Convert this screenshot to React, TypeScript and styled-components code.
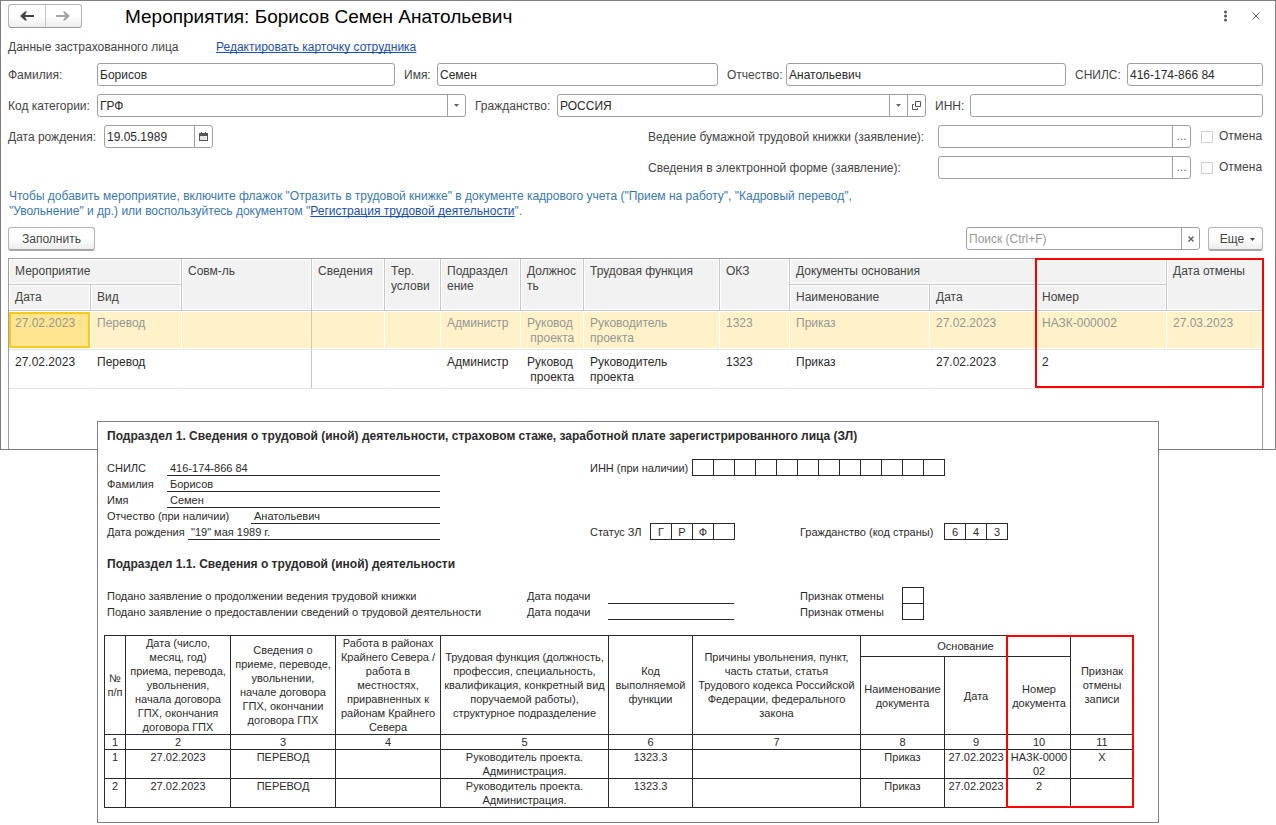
import React from "react";
import styled, { createGlobalStyle, css } from "styled-components";

const GlobalStyle = createGlobalStyle`
  *, *::before, *::after { box-sizing: border-box; }
  body {
    margin: 0;
    background: #fff;
    color: #333;
    font: 12px/15px "Liberation Sans", Arial, sans-serif;
  }
  button, input, select { font: inherit; color: inherit; margin: 0; }
`;

const line = "#a0a0a0";

const Page = styled.main`
  min-width: 1180px;
`;

/* ---------- event window ---------- */

const Window = styled.section`
  border: 1px solid #808080;
  padding: 3px 12px 0 7px;
  color: #444;
`;

const TitleBar = styled.header`
  display: flex;
  align-items: center;
  height: 24px;
`;

const NavGroup = styled.div`
  display: flex;
  width: 74px;
  height: 24px;
  border: 1px solid #b3b3b3;
  border-bottom-color: #999;
  border-radius: 3px;
  background: linear-gradient(#fff 50%, #ececec);
`;

const NavButton = styled.button`
  flex: 1;
  display: grid;
  place-items: center;
  padding: 0;
  border: 0;
  background: none;
  color: #444;
  & + & {
    border-left: 1px solid #c6c6c6;
    color: #a6a6a6;
  }
`;

const Title = styled.h1`
  flex: 1;
  margin: 0 0 0 43px;
  padding-top: 2px;
  color: #000;
  font-size: 19px;
  font-weight: 400;
  line-height: 24px;
`;

const PlainButton = styled.button`
  display: grid;
  place-items: center;
  width: 30px;
  height: 24px;
  padding: 0;
  border: 0;
  background: none;
  color: #555;
  &:last-child { margin-right: -8px; }
`;

const SubBar = styled.div`
  display: grid;
  grid-template-columns: 208px auto;
  justify-content: start;
  margin-top: 12px;
`;

const Link = styled.a`
  color: #1a50b0;
  text-decoration: underline;
  text-decoration-skip-ink: none;
  text-underline-offset: 1px;
`;

const Form = styled.form`
  display: grid;
  gap: 8px;
  margin-top: 8px;
`;

const Row = styled.div<{ $cols: string }>`
  display: grid;
  grid-template-columns: ${(p) => p.$cols};
  gap: 9px;
`;

const RightSide = styled.div`
  display: flex;
  justify-content: flex-end;
`;

const Field = styled.div<{ $label: number }>`
  flex: 1;
  display: grid;
  grid-template-columns: ${(p) => p.$label}px minmax(0, 1fr);
  align-items: center;
  white-space: nowrap;
  label { padding-top: 2px; }
`;

const Control = styled.div`
  display: flex;
  height: 23px;
  border: 1px solid ${line};
  border-radius: 3px;
  background: #fff;
  color: #2b2b2b;
  overflow: hidden;
`;

const inputLook = css`
  flex: 1;
  min-width: 0;
  padding: 2px 2px 0;
  border: 0;
  outline: 0;
  background: none;
`;

const TextInput = styled.input`
  ${inputLook}
  &::placeholder { color: #999; opacity: 1; }
`;

const Select = styled.select`
  ${inputLook}
  appearance: none;
`;

const Addon = styled.button`
  display: grid;
  place-items: center;
  width: 18px;
  padding: 0;
  border: 0;
  border-left: 1px solid ${line};
  background: none;
  color: #666;
`;

const Claim = styled.div`
  display: flex;
  align-items: center;
  width: 615px;
`;

const Check = styled.label`
  display: flex;
  align-items: center;
  gap: 6px;
  width: 62px;
  margin-left: 10px;
  line-height: 17px;
  input {
    appearance: none;
    width: 12px;
    height: 12px;
    border: 1px solid #d0d0d0;
    background: #fff;
  }
`;

const Hint = styled.p`
  margin: 10px 0 0 1px;
  color: #3a78ae;
`;

const Toolbar = styled.div`
  display: flex;
  gap: 8px;
  margin-top: 8px;
`;

const Search = styled(Control)`
  width: 234px;
  margin-left: auto;
`;

const PushButton = styled.button<{ $width: number }>`
  display: flex;
  align-items: center;
  justify-content: center;
  gap: 6px;
  width: ${(p) => p.$width}px;
  height: 24px;
  padding: 2px 0 0;
  border: 1px solid #b3b3b3;
  border-bottom: 2px solid #a6a6a6;
  border-radius: 3px;
  background: linear-gradient(#fff 50%, #ececec);
  svg { margin-right: -4px; }
`;

const GridBox = styled.div`
  position: relative;
  min-height: 191px;
  margin-top: 7px;
  border: 1px solid ${line};
  border-bottom: 0;
`;

const EventTable = styled.table`
  width: 100%;
  table-layout: fixed;
  border-collapse: separate;
  border-spacing: 0;
  th, td {
    padding: 5px 0 0 6px;
    text-align: left;
    vertical-align: top;
    font-weight: 400;
    white-space: pre;
    overflow: hidden;
  }
  th {
    height: 26px;
    border-right: 1px solid #c8c8c8;
    border-bottom: 1px solid #c8c8c8;
    background: #f2f2f2;
    box-shadow: inset 0 0 0 1px #fff;
  }
  th:last-child[rowspan] { border-right: 0; }
`;

const EventRow = styled.tr<{ $active?: boolean }>`
  color: #2b2b2b;
  td {
    height: 39px;
    border-right: 1px solid #fff;
    border-bottom: 1px solid #e4e4e4;
  }
  td:nth-child(3) { border-right-color: #c8c8c8; }
  ${(p) =>
    p.$active &&
    css`
      color: #969696;
      td {
        background: #fff2c8;
        box-shadow: inset 0 1px #fff, inset 0 -1px #fff;
      }
      td:first-child {
        position: relative;
        z-index: 0;
        background: #fff;
      }
      td:first-child::before {
        content: "";
        position: absolute;
        z-index: -1;
        inset: 1px 0 1px 0;
        border: 2px solid #fbc91d;
        background: #ffe58f;
      }
    `}
`;

const GridMark = styled.div`
  position: absolute;
  top: -1px;
  right: -2px;
  width: 229px;
  height: 130px;
  border: 2px solid #f00;
  pointer-events: none;
`;

/* ---------- printed report ---------- */

const Sheet = styled.section`
  position: relative;
  margin: -29px 117px 0 97px;
  padding: 6px 24px 14px 6px;
  border: 1px solid #808080;
  background: #fff;
  color: #2b2b2b;
  font-size: 11px;
`;

const Modules = styled.div`
  display: grid;
  grid-template-columns: repeat(49, minmax(0, 1fr));
  grid-auto-rows: 16px;
  margin-right: 1px;
  line-height: 17px;
  white-space: nowrap;
`;

const Cell = styled.div<{ $row: number; $col: number; $span: number; $line?: boolean }>`
  grid-row: ${(p) => p.$row};
  grid-column: ${(p) => p.$col} / span ${(p) => p.$span};
  padding-left: 3px;
  border-bottom: ${(p) => (p.$line ? "1px solid #2b2b2b" : "0")};
`;

const Heading = styled.h2<{ $row: number }>`
  grid-row: ${(p) => p.$row};
  grid-column: 1 / -1;
  margin: 0;
  padding-left: 3px;
  font-size: 12px;
  line-height: 16px;
  font-weight: 700;
`;

const Box = styled.div<{ $row: number; $col: number }>`
  grid-row: ${(p) => p.$row};
  grid-column: ${(p) => p.$col};
  margin: -1px -1px 0 0;
  border: 1px solid #2b2b2b;
  line-height: 17px;
  text-align: center;
`;

const ReportWrap = styled.div`
  position: relative;
  margin-top: 15px;
`;

const ReportTable = styled.table`
  width: 100%;
  table-layout: fixed;
  border-collapse: collapse;
  line-height: 14px;
  text-align: center;
  th, td {
    padding: 0;
    border: 1px solid #2b2b2b;
    font-weight: 400;
    white-space: pre;
    overflow: visible;
  }
  td { height: 29px; vertical-align: top; }
`;

const HeadRow = styled.tr<{ $height: number }>`
  th { height: ${(p) => p.$height}px; }
`;

const ReportMark = styled.div`
  position: absolute;
  top: 0;
  bottom: 0;
  right: 0;
  width: 128px;
  border: 2px solid #f00;
  pointer-events: none;
`;

/* ---------- icons ---------- */

const Arrow = ({ flip }: { flip?: boolean }) => (
  <svg width="14" height="10" viewBox="0 0 14 10" aria-hidden="true">
    <path
      d="M0 5L5 .5H7L5 4H14V6H5L7 9.5H5Z"
      transform={flip ? "matrix(-1 0 0 1 14 0)" : undefined}
      fill="currentColor"
    />
  </svg>
);

const Caret = () => (
  <svg width="5" height="3" viewBox="0 0 5 3" aria-hidden="true">
    <path d="M0 0H5L2.5 3Z" fill="currentColor" />
  </svg>
);

const Dots = () => (
  <svg width="4" height="12" viewBox="0 0 4 12" aria-hidden="true">
    <g fill="currentColor">
      <circle cx="1.5" cy="2" r="1.5" />
      <circle cx="1.5" cy="6" r="1.5" />
      <circle cx="1.5" cy="10" r="1.5" />
    </g>
  </svg>
);

const Cross = ({ size, width }: { size: number; width: number }) => (
  <svg width={size} height={size} viewBox="0 0 8 8" aria-hidden="true">
    <path d="M.7.7L7.3 7.3M7.3.7L.7 7.3" stroke="currentColor" strokeWidth={width} />
  </svg>
);

const Calendar = () => (
  <svg width="9" height="9" viewBox="0 0 9 9" aria-hidden="true">
    <path d="M0 1H9V9H0Z" fill="#555" />
    <path d="M2.5 0V2M6.5 0V2" stroke="#555" />
    <path d="M1 4H8V8H1Z" fill="#fff" />
    <path d="M1.5 5H7.5M1.5 7H7.5" stroke="#999" strokeDasharray="1 1" />
  </svg>
);

const OpenIcon = () => (
  <svg width="9" height="9" viewBox="0 0 9 9" aria-hidden="true">
    <g fill="none" stroke="#555">
      <path d="M3.5 .5H8.5V5.5H3.5Z" />
      <path d="M2 3.5H.5V8.5H5.5V7" />
    </g>
  </svg>
);

/* ---------- data ---------- */

const eventCols = [82, 91, 0, 73, 56, 80, 63, 136, 70, 140, 106, 131, 95];

const events = [
  ["27.02.2023", "Перевод", "", "", "", "Администр", "Руковод\n проекта", "Руководитель\nпроекта", "1323", "Приказ", "27.02.2023", "НАЗК-000002", "27.03.2023"],
  ["27.02.2023", "Перевод", "", "", "", "Администр", "Руковод\n проекта", "Руководитель\nпроекта", "1323", "Приказ", "27.02.2023", "2", ""],
];

const person = [
  { row: 3, label: "СНИЛС", value: "416-174-866 84", start: 4 },
  { row: 4, label: "Фамилия", value: "Борисов", start: 4 },
  { row: 5, label: "Имя", value: "Семен", start: 4 },
  { row: 6, label: "Отчество (при наличии)", value: "Анатольевич", start: 8 },
  { row: 7, label: "Дата рождения", value: '"19" мая 1989 г.', start: 5 },
];

const statements = [
  { row: 11, text: "Подано заявление о продолжении ведения трудовой книжки" },
  { row: 12, text: "Подано заявление о предоставлении сведений о трудовой деятельности" },
];

const reportCols = [21, 105, 105, 105, 168, 84, 168, 84, 63, 63, 63];

const reportHead = [
  "№\nп/п",
  "Дата (число,\nмесяц, год)\nприема, перевода,\nувольнения,\nначала договора\nГПХ, окончания\nдоговора ГПХ",
  "Сведения о\nприеме, переводе,\nувольнении,\nначале договора\nГПХ, окончании\nдоговора ГПХ",
  "Работа в районах\nКрайнего Севера /\nработа в\nместностях,\nприравненных к\nрайонам Крайнего\nСевера",
  "Трудовая функция (должность,\nпрофессия, специальность,\nквалификация, конкретный вид\nпоручаемой работы),\nструктурное подразделение",
  "Код\nвыполняемой\nфункции",
  "Причины увольнения, пункт,\nчасть статьи, статья\nТрудового кодекса Российской\nФедерации, федерального\nзакона",
];

const reportRows = [
  ["1", "27.02.2023", "ПЕРЕВОД", "", "Руководитель проекта.\nАдминистрация.", "1323.3", "", "Приказ", "27.02.2023", "НАЗК-0000\n02", "X"],
  ["2", "27.02.2023", "ПЕРЕВОД", "", "Руководитель проекта.\nАдминистрация.", "1323.3", "", "Приказ", "27.02.2023", "2", ""],
];

/* ---------- parts ---------- */

type TextFieldProps = { id: string; label: string; labelWidth: number; value?: string; children?: React.ReactNode };

const TextField = ({ id, label, labelWidth, value = "", children }: TextFieldProps) => (
  <Field $label={labelWidth}>
    <label htmlFor={id}>{label}</label>
    <Control>
      <TextInput id={id} defaultValue={value} />
      {children}
    </Control>
  </Field>
);

const SelectField = ({ id, label, labelWidth, value, children }: TextFieldProps) => (
  <Field $label={labelWidth}>
    <label htmlFor={id}>{label}</label>
    <Control>
      <Select id={id} defaultValue={value}>
        <option>{value}</option>
      </Select>
      <Addon type="button" aria-label="Выбрать из списка"><Caret /></Addon>
      {children}
    </Control>
  </Field>
);

const ClaimField = ({ id, label }: { id: string; label: string }) => (
  <RightSide>
    <Claim>
      <TextField id={id} label={label} labelWidth={290}>
        <Addon type="button" aria-label="Выбрать">...</Addon>
      </TextField>
      <Check>
        <input type="checkbox" disabled />
        Отмена
      </Check>
    </Claim>
  </RightSide>
);

const Boxes = ({ row, col, values }: { row: number; col: number; values: string[] }) => (
  <>
    {values.map((v, i) => (
      <Box key={i} $row={row} $col={col + i}>{v}</Box>
    ))}
  </>
);

const EventGrid = () => (
  <GridBox>
    <EventTable>
      <colgroup>
        {eventCols.map((w, i) => <col key={i} width={w || undefined} />)}
      </colgroup>
      <thead>
        <tr>
          <th colSpan={2}>Мероприятие</th>
          <th rowSpan={2}>Совм-ль</th>
          <th rowSpan={2}>Сведения</th>
          <th rowSpan={2}>{"Тер.\nуслови"}</th>
          <th rowSpan={2}>{"Подраздел\nение"}</th>
          <th rowSpan={2}>{"Должнос\nть"}</th>
          <th rowSpan={2}>Трудовая функция</th>
          <th rowSpan={2}>ОКЗ</th>
          <th colSpan={3}>Документы основания</th>
          <th rowSpan={2}>Дата отмены</th>
        </tr>
        <tr>
          <th>Дата</th>
          <th>Вид</th>
          <th>Наименование</th>
          <th>Дата</th>
          <th>Номер</th>
        </tr>
      </thead>
      <tbody>
        {events.map((cells, r) => (
          <EventRow key={r} $active={r === 0}>
            {cells.map((c, i) => <td key={i}>{c}</td>)}
          </EventRow>
        ))}
      </tbody>
    </EventTable>
    <GridMark />
  </GridBox>
);

const Report = () => (
  <Sheet>
    <Modules>
      <Heading $row={1}>
        Подраздел 1. Сведения о трудовой (иной) деятельности, страховом стаже, заработной плате зарегистрированного лица (ЗЛ)
      </Heading>
      {person.map((p) => (
        <React.Fragment key={p.row}>
          <Cell $row={p.row} $col={1} $span={p.start - 1}>{p.label}</Cell>
          <Cell $row={p.row} $col={p.start} $span={17 - p.start} $line>{p.value}</Cell>
        </React.Fragment>
      ))}
      <Cell $row={3} $col={24} $span={5}>ИНН (при наличии)</Cell>
      <Boxes row={3} col={29} values={Array(12).fill("")} />
      <Cell $row={7} $col={24} $span={3}>Статус ЗЛ</Cell>
      <Boxes row={7} col={27} values={["Г", "Р", "Ф", ""]} />
      <Cell $row={7} $col={34} $span={7}>Гражданство (код страны)</Cell>
      <Boxes row={7} col={41} values={["6", "4", "3"]} />
      <Heading $row={9}>Подраздел 1.1. Сведения о трудовой (иной) деятельности</Heading>
      {statements.map((s) => (
        <React.Fragment key={s.row}>
          <Cell $row={s.row} $col={1} $span={20}>{s.text}</Cell>
          <Cell $row={s.row} $col={21} $span={4}>Дата подачи</Cell>
          <Cell $row={s.row} $col={25} $span={6} $line />
          <Cell $row={s.row} $col={34} $span={5}>Признак отмены</Cell>
          <Box $row={s.row} $col={39} />
        </React.Fragment>
      ))}
    </Modules>
    <ReportWrap>
      <ReportTable>
        <colgroup>
          {reportCols.map((w, i) => <col key={i} width={w} />)}
        </colgroup>
        <thead>
          <HeadRow $height={21}>
            {reportHead.map((h, i) => <th key={i} rowSpan={2}>{h}</th>)}
            <th colSpan={3}>Основание</th>
            <th rowSpan={2}>{"Признак\nотмены\nзаписи"}</th>
          </HeadRow>
          <HeadRow $height={78}>
            <th>{"Наименование\nдокумента"}</th>
            <th>Дата</th>
            <th>{"Номер\nдокумента"}</th>
          </HeadRow>
          <HeadRow $height={15}>
            {reportCols.map((_, i) => <th key={i}>{i + 1}</th>)}
          </HeadRow>
        </thead>
        <tbody>
          {reportRows.map((cells, r) => (
            <tr key={r}>
              {cells.map((c, i) => <td key={i}>{c}</td>)}
            </tr>
          ))}
        </tbody>
      </ReportTable>
      <ReportMark />
    </ReportWrap>
  </Sheet>
);

export default function App() {
  return (
    <Page>
      <GlobalStyle />
      <Window>
        <TitleBar>
          <NavGroup>
            <NavButton type="button" aria-label="Назад"><Arrow /></NavButton>
            <NavButton type="button" aria-label="Вперед"><Arrow flip /></NavButton>
          </NavGroup>
          <Title>Мероприятия: Борисов Семен Анатольевич</Title>
          <PlainButton type="button" aria-label="Меню"><Dots /></PlainButton>
          <PlainButton type="button" aria-label="Закрыть"><Cross size={8} width={1} /></PlainButton>
        </TitleBar>
        <SubBar>
          <span>Данные застрахованного лица</span>
          <Link href="#card">Редактировать карточку сотрудника</Link>
        </SubBar>
        <Form>
          <Row $cols="387fr 314fr 339fr 188px">
            <TextField id="last" label="Фамилия:" labelWidth={89} value="Борисов" />
            <TextField id="first" label="Имя:" labelWidth={33} value="Семен" />
            <TextField id="middle" label="Отчество:" labelWidth={59} value="Анатольевич" />
            <TextField id="snils" label="СНИЛС:" labelWidth={52} value="416-174-866 84" />
          </Row>
          <Row $cols="458fr 451fr 328px">
            <SelectField id="category" label="Код категории:" labelWidth={89} value="ГРФ" />
            <SelectField id="citizen" label="Гражданство:" labelWidth={82} value="РОССИЯ">
              <Addon type="button" aria-label="Открыть"><OpenIcon /></Addon>
            </SelectField>
            <TextField id="inn" label="ИНН:" labelWidth={35} />
          </Row>
          <Row $cols="205px auto">
            <TextField id="birth" label="Дата рождения:" labelWidth={96} value="19.05.1989">
              <Addon type="button" aria-label="Календарь"><Calendar /></Addon>
            </TextField>
            <ClaimField id="paper" label="Ведение бумажной трудовой книжки (заявление):" />
          </Row>
          <ClaimField id="digital" label="Сведения в электронной форме (заявление):" />
        </Form>
        <Hint>
          Чтобы добавить мероприятие, включите флажок "Отразить в трудовой книжке" в документе кадрового учета ("Прием на работу", "Кадровый перевод",
          <br />
          "Увольнение" и др.) или воспользуйтесь документом "<Link href="#registration">Регистрация трудовой деятельности</Link>".
        </Hint>
        <Toolbar>
          <PushButton type="button" $width={87}>Заполнить</PushButton>
          <Search>
            <TextInput type="text" placeholder="Поиск (Ctrl+F)" aria-label="Поиск" />
            <Addon type="button" aria-label="Очистить"><Cross size={6} width={2} /></Addon>
          </Search>
          <PushButton type="button" $width={55}>Еще <Caret /></PushButton>
        </Toolbar>
        <EventGrid />
      </Window>
      <Report />
    </Page>
  );
}
